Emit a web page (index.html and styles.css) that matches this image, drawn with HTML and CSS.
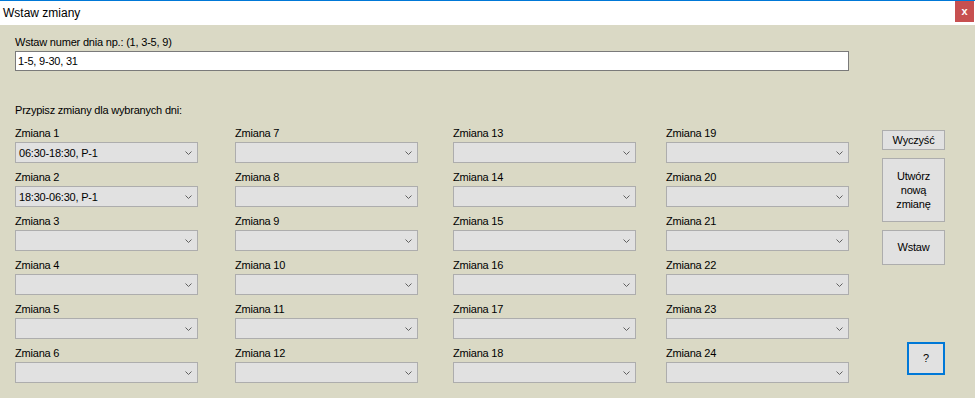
FILE: index.html
```html
<!DOCTYPE html>
<html lang="pl">
<head>
    <meta charset="UTF-8">
    <title>Wstaw zmiany</title>
    <link rel="stylesheet" href="styles.css">
</head>
<body>
    <div class="window">
        <!-- Title bar -->
        <div class="titlebar">
            <span class="title">Wstaw zmiany</span>
            <button class="close">x</button>
        </div>

        <div class="content">
            <div class="label">Wstaw numer dnia np.: (1, 3-5, 9)</div>
            <input class="days" type="text" value="1-5, 9-30, 31">

            <div class="label section">Przypisz zmiany dla wybranych dni:</div>

            <div class="main">
                <!-- Shift combos, filled column by column -->
                <div class="grid" id="grid"></div>

                <!-- Right: buttons -->
                <div class="side">
                    <button class="btn btn-clear">Wyczyść</button>
                    <button class="btn btn-new">Utwórz<br>nową<br>zmianę</button>
                    <button class="btn btn-insert">Wstaw</button>
                    <button class="btn btn-help">?</button>
                </div>
            </div>
        </div>
    </div>

    <script>
        const values = { 1: "06:30-18:30, P-1", 2: "18:30-06:30, P-1" };
        const grid = document.getElementById("grid");

        for (let i = 1; i <= 24; i++) {
            const field = document.createElement("div");
            field.className = "field";
            field.innerHTML =
                '<div class="label">Zmiana ' + i + '</div>' +
                '<div class="combo"><span class="combo-text">' + (values[i] || "") + '</span>' +
                '<svg class="chevron" width="7" height="4" viewBox="0 0 7 4"><path d="M0.5 0.5 L3.5 3.5 L6.5 0.5" fill="none" stroke="#606060" stroke-width="1"/></svg></div>';
            grid.appendChild(field);
        }
    </script>
</body>
</html>
```

FILE: styles.css
```css
/* Window */
body {
    margin: 0;
    font-family: "Liberation Sans", Arial, sans-serif;
    color: #000;
    background: #dad9c5;
}

.window {
    width: 975px;
    height: 398px;
    background: #dad9c5;
    overflow: hidden;
}

/* Title bar */
.titlebar {
    display: flex;
    align-items: flex-start;
    justify-content: space-between;
    height: 24px;
    border-top: 1px solid #0078d7;
    background: #fff;
}

.title {
    padding-left: 3px;
    font-size: 12px;
    line-height: 24px;
}

.close {
    width: 19px;
    height: 21px;
    margin-right: 1px;
    padding: 0;
    border: 0;
    background: #c75050;
    color: #fff;
    font-family: "Liberation Sans", Arial, sans-serif;
    font-size: 11px;
    font-weight: bold;
    line-height: 19px;
}

/* Form */
.content {
    padding: 11px 15px 0;
}

.label {
    font-size: 11px;
    line-height: 13px;
    letter-spacing: -0.2px;
    margin-bottom: 2px;
    white-space: nowrap;
}

.days {
    display: block;
    box-sizing: border-box;
    width: 834px;
    height: 20px;
    margin: 0;
    padding: 0 2px;
    border: 1px solid #7a7a7a;
    background: #fff;
    font-family: "Liberation Sans", Arial, sans-serif;
    font-size: 11px;
    letter-spacing: -0.2px;
    outline: none;
}

.section {
    margin-top: 33px;
    margin-bottom: 10px;
}

.main {
    display: flex;
}

/* Shift grid */
.grid {
    display: grid;
    grid-auto-flow: column;
    grid-template-rows: repeat(6, auto);
    grid-template-columns: 220px 218px 213px 183px;
    row-gap: 8px;
}

.combo {
    display: flex;
    align-items: center;
    justify-content: space-between;
    box-sizing: border-box;
    width: 183px;
    height: 21px;
    padding: 1px 5px 0 3px;
    border: 1px solid #adadad;
    background: #e1e1e1;
}

.combo-text {
    font-size: 11px;
    letter-spacing: -0.2px;
    white-space: nowrap;
}

.chevron {
    flex-shrink: 0;
}

/* Right column */
.side {
    display: flex;
    flex-direction: column;
    gap: 8px;
    width: 63px;
    margin-left: 33px;
    padding: 3px 0 8px;
}

.btn {
    box-sizing: border-box;
    width: 63px;
    margin: 0;
    padding: 0;
    border: 1px solid #adadad;
    background: #e1e1e1;
    color: #000;
    font-family: "Liberation Sans", Arial, sans-serif;
    font-size: 11px;
    line-height: 13px;
    letter-spacing: -0.2px;
}

.btn-clear {
    height: 20px;
}

.btn-new {
    height: 64px;
    line-height: 14px;
}

.btn-insert {
    height: 35px;
}

.btn-help {
    align-self: flex-end;
    width: 38px;
    height: 33px;
    margin-top: auto;
    border: 2px solid #0078d7;
}
```
